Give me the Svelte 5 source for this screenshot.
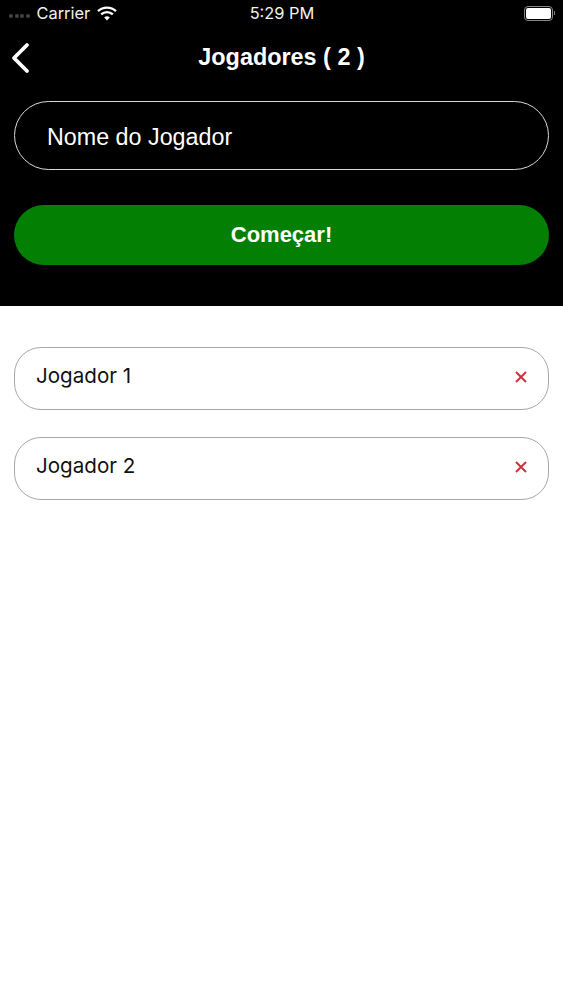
<script>
  const players = ['Jogador 1', 'Jogador 2'];
</script>

<div class="page">
  <header class="top">
    <div class="status">
      <div class="status-left">
        <span class="dots"><i></i><i></i><i></i><i></i></span>
        <span class="carrier">Carrier</span>
        <svg class="wifi" width="20" height="15" viewBox="0 0 20 15">
          <path d="M1 5.2 A13 13 0 0 1 19 5.2" fill="none" stroke="#fff" stroke-width="2.4"/>
          <path d="M4.2 8.4 A8.6 8.6 0 0 1 15.8 8.4" fill="none" stroke="#fff" stroke-width="2.4"/>
          <path d="M7.2 11.4 A4.2 4.2 0 0 1 12.8 11.4 L10 14.4 Z" fill="#fff"/>
        </svg>
      </div>
      <span class="time">5:29 PM</span>
      <div class="battery"><span class="cell"><b></b></span><span class="nub"></span></div>
    </div>
    <div class="nav">
      <svg class="back" width="20" height="32" viewBox="0 0 20 32">
        <path d="M17 3 L4 16 L17 29" fill="none" stroke="#fff" stroke-width="3.8" stroke-linecap="round" stroke-linejoin="round"/>
      </svg>
      <span class="title">Jogadores ( 2 )</span>
    </div>
    <div class="field"><span>Nome do Jogador</span></div>
    <div class="start">Começar!</div>
  </header>
  <main class="list">
    {#each players as p}
      <div class="row">
        <span class="name">{p}</span>
        <svg class="x" width="12" height="12" viewBox="0 0 12 12">
          <path d="M1 1 L11 11 M11 1 L1 11" stroke="#d0303a" stroke-width="2" fill="none"/>
        </svg>
      </div>
    {/each}
  </main>
</div>

<style>
  :global(body) {
    margin: 0;
    background: #fff;
  }
  .page {
    width: 563px;
    height: 1000px;
    overflow: hidden;
    font-family: Inter, "Liberation Sans", sans-serif;
    background: #fff;
  }
  .top {
    background: #000;
    height: 306px;
    box-sizing: border-box;
    color: #fff;
    padding: 0 14px;
    display: flex;
    flex-direction: column;
  }
  .status {
    height: 26px;
    margin: 0 -14px;
    padding: 0 8px 0 9px;
    display: grid;
    grid-template-columns: 1fr auto 1fr;
    align-items: center;
    font-size: 16.4px;
    color: #f2f2f2;
  }
  .status-left {
    display: flex;
    align-items: center;
  }
  .dots {
    display: flex;
    gap: 1.5px;
    margin-right: 7px;
    margin-top: 5px;
  }
  .dots i {
    width: 4px;
    height: 4px;
    border-radius: 50%;
    background: #444;
  }
  .carrier {
    margin-right: 7px;
  }
  .battery {
    justify-self: end;
    display: flex;
    align-items: center;
    gap: 1px;
  }
  .cell {
    width: 25px;
    height: 11px;
    border: 1px solid #888;
    border-radius: 4px;
    padding: 1px;
    display: flex;
  }
  .cell b {
    flex: 1;
    background: #fff;
    border-radius: 2px;
  }
  .nub {
    width: 1.5px;
    height: 4px;
    background: #777;
  }
  .nav {
    height: 62px;
    position: relative;
    display: flex;
    align-items: center;
    justify-content: center;
  }
  .back {
    position: absolute;
    left: -4px;
    top: 16px;
  }
  .title {
    font-family: "Liberation Sans", Arial, sans-serif;
    font-weight: 700;
    font-size: 23.4px;
  }
  .field {
    margin-top: 13px;
    height: 69px;
    box-sizing: border-box;
    border: 1px solid #d8d8d8;
    border-radius: 35px;
    padding-left: 32px;
    display: flex;
    align-items: center;
    font-family: "Liberation Sans", Arial, sans-serif;
    font-size: 23.3px;
  }
  .field span {
    margin-top: 4px;
  }
  .start {
    margin-top: 35px;
    height: 60px;
    border-radius: 30px;
    background: #037f03;
    display: flex;
    align-items: center;
    justify-content: center;
    font-family: "Liberation Sans", Arial, sans-serif;
    font-weight: 700;
    font-size: 22px;
  }
  .list {
    padding: 41px 14px 0;
    display: flex;
    flex-direction: column;
    gap: 27.5px;
  }
  .row {
    height: 62.5px;
    box-sizing: border-box;
    border: 1.5px solid #a8a6ab;
    border-radius: 27px;
    padding: 0 21px;
    display: flex;
    align-items: center;
    justify-content: space-between;
    color: #111;
    font-size: 20.6px;
  }
  .name {
    margin-top: -5px;
  }
  .x {
    margin-top: -3px;
  }
</style>
